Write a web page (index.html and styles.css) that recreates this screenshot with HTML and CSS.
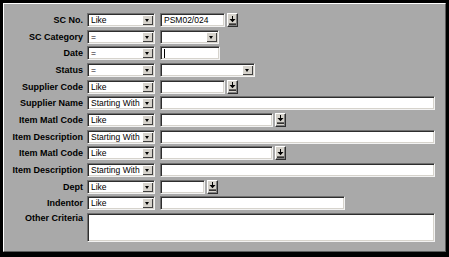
FILE: index.html
```html
<!DOCTYPE html>
<html lang="en">
<head>
    <meta charset="UTF-8">
    <title>SC Search</title>
    <link rel="stylesheet" href="styles.css">
</head>
<body>
    <div class="panel">
        <div class="row">
            <label class="lbl">SC No.</label>
            <div class="box combo op"><span>Like</span><i class="drop"></i></div>
            <div class="box w-code">PSM02/024</div>
            <button class="lookup"><svg width="7" height="9" viewBox="0 0 7 9"><path d="M3 0h1v3h-1z M0.5 3h6l-3 3.2z M0 7.5h7v1.2h-7z" fill="#000"/></svg></button>
        </div>
        <div class="row">
            <label class="lbl">SC Category</label>
            <div class="box combo op"><span>=</span><i class="drop"></i></div>
            <div class="box combo w-cat"><span></span><i class="drop"></i></div>
        </div>
        <div class="row">
            <label class="lbl">Date</label>
            <div class="box combo op"><span>=</span><i class="drop"></i></div>
            <div class="box w-date"><span class="caret"></span></div>
        </div>
        <div class="row">
            <label class="lbl">Status</label>
            <div class="box combo op"><span>=</span><i class="drop"></i></div>
            <div class="box combo w-status"><span></span><i class="drop"></i></div>
        </div>
        <div class="row">
            <label class="lbl">Supplier Code</label>
            <div class="box combo op"><span>Like</span><i class="drop"></i></div>
            <div class="box w-code"></div>
            <button class="lookup"><svg width="7" height="9" viewBox="0 0 7 9"><path d="M3 0h1v3h-1z M0.5 3h6l-3 3.2z M0 7.5h7v1.2h-7z" fill="#000"/></svg></button>
        </div>
        <div class="row">
            <label class="lbl">Supplier Name</label>
            <div class="box combo op"><span>Starting With</span><i class="drop"></i></div>
            <div class="box w-full"></div>
        </div>
        <div class="row">
            <label class="lbl">Item Matl Code</label>
            <div class="box combo op"><span>Like</span><i class="drop"></i></div>
            <div class="box w-matl"></div>
            <button class="lookup"><svg width="7" height="9" viewBox="0 0 7 9"><path d="M3 0h1v3h-1z M0.5 3h6l-3 3.2z M0 7.5h7v1.2h-7z" fill="#000"/></svg></button>
        </div>
        <div class="row">
            <label class="lbl">Item Description</label>
            <div class="box combo op"><span>Starting With</span><i class="drop"></i></div>
            <div class="box w-full"></div>
        </div>
        <div class="row">
            <label class="lbl">Item Matl Code</label>
            <div class="box combo op"><span>Like</span><i class="drop"></i></div>
            <div class="box w-matl"></div>
            <button class="lookup"><svg width="7" height="9" viewBox="0 0 7 9"><path d="M3 0h1v3h-1z M0.5 3h6l-3 3.2z M0 7.5h7v1.2h-7z" fill="#000"/></svg></button>
        </div>
        <div class="row">
            <label class="lbl">Item Description</label>
            <div class="box combo op"><span>Starting With</span><i class="drop"></i></div>
            <div class="box w-full"></div>
        </div>
        <div class="row">
            <label class="lbl">Dept</label>
            <div class="box combo op"><span>Like</span><i class="drop"></i></div>
            <div class="box w-dept"></div>
            <button class="lookup"><svg width="7" height="9" viewBox="0 0 7 9"><path d="M3 0h1v3h-1z M0.5 3h6l-3 3.2z M0 7.5h7v1.2h-7z" fill="#000"/></svg></button>
        </div>
        <div class="row">
            <label class="lbl">Indentor</label>
            <div class="box combo op"><span>Like</span><i class="drop"></i></div>
            <div class="box w-indentor"></div>
        </div>
        <div class="row row-top">
            <label class="lbl lbl-top">Other Criteria</label>
            <div class="box memo"></div>
        </div>
    </div>
</body>
</html>
```

FILE: styles.css
```css
body {
    margin: 0;
    background-color: #000;
    font-family: "Liberation Sans", Arial, sans-serif;
    width: 449px;
    height: 257px;
    overflow: hidden;
}
.panel {
    box-sizing: border-box;
    width: 443px;
    height: 249px;
    margin: 3px 0 0 3px;
    padding-top: 9px;
    background-color: #a9a9a9;
    border-top: 1px solid #fff;
    border-left: 1px solid #fff;
    border-right: 1px solid #5c5c5c;
    border-bottom: 1px solid #5c5c5c;
    display: flex;
    flex-direction: column;
    gap: 2.667px;
}
.row {
    display: flex;
    align-items: center;
    height: 14px;
}
.row-top {
    align-items: flex-start;
    height: 29px;
}
.lbl {
    width: 79px;
    margin-right: 4px;
    text-align: right;
    font-weight: bold;
    font-size: 9px;
    color: #000;
    white-space: nowrap;
}
.lbl-top {
    line-height: 10px;
}
.box {
    box-sizing: border-box;
    height: 14px;
    padding: 1px 1px 1px 3px;
    display: flex;
    align-items: center;
    background-color: #fff;
    border: 1px solid;
    border-color: #707070 #f2f2f2 #f2f2f2 #707070;
    box-shadow: inset 1px 1px 0 #2e2e2e, inset -1px -1px 0 #d6d3cc;
    font-size: 8.5px;
    color: #000;
    white-space: nowrap;
    overflow: hidden;
}
.combo span {
    flex: 1;
}
.drop {
    position: relative;
    width: 11px;
    height: 10px;
    flex: none;
    box-sizing: border-box;
    background-color: #d6d3cc;
    box-shadow: inset 1px 1px 0 #fff, inset -1px -1px 0 #404040;
}
.drop::after {
    content: "";
    position: absolute;
    left: 3px;
    top: 4px;
    border-left: 2.5px solid transparent;
    border-right: 2.5px solid transparent;
    border-top: 3px solid #000;
}
.op {
    width: 68px;
    margin-right: 5px;
}
.w-code {
    width: 65px;
}
.w-cat {
    width: 59px;
}
.w-date {
    width: 60px;
}
.w-status {
    width: 95px;
}
.w-full {
    width: 275px;
}
.w-matl {
    width: 113px;
}
.w-dept {
    width: 45px;
}
.w-indentor {
    width: 185px;
}
.memo {
    width: 348px;
    height: 29px;
}
.caret {
    width: 1px;
    height: 9px;
    background-color: #000;
}
.lookup {
    box-sizing: border-box;
    width: 11px;
    height: 14px;
    margin-left: 2px;
    padding: 0;
    display: flex;
    align-items: center;
    justify-content: center;
    background-color: #d6d3cc;
    border: 1px solid;
    border-color: #fff #2e2e2e #2e2e2e #fff;
    box-shadow: inset -1px -1px 0 #808080;
}
.lookup svg {
    display: block;
}
```
